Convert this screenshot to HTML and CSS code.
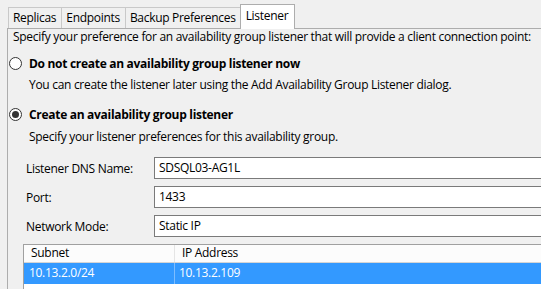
FILE: index.html
```html
<!DOCTYPE html>
<html lang="en">
<head>
    <meta charset="UTF-8">
    <title>Listener</title>
    <link rel="stylesheet" href="styles.css">
</head>
<body>
    <div class="tabs">
        <div class="tab">Replicas</div>
        <div class="tab">Endpoints</div>
        <div class="tab">Backup Preferences</div>
        <div class="tab active">Listener</div>
    </div>

    <div class="panel">
        <div class="intro">Specify your preference for an availability group listener that will provide a client connection point:</div>

        <div class="option">
            <span class="radio"></span>
            <span class="option-title">Do not create an availability group listener now</span>
        </div>
        <div class="hint">You can create the listener later using the Add Availability Group Listener dialog.</div>

        <div class="option second">
            <span class="radio checked"></span>
            <span class="option-title">Create an availability group listener</span>
        </div>
        <div class="hint last">Specify your listener preferences for this availability group.</div>

        <div class="fields">
            <div class="field">
                <label>Listener DNS Name:</label>
                <div class="input">SDSQL03-AG1L</div>
            </div>
            <div class="field">
                <label>Port:</label>
                <div class="input">1433</div>
            </div>
            <div class="field">
                <label>Network Mode:</label>
                <div class="input">Static IP</div>
            </div>
        </div>

        <div class="grid">
            <div class="grid-row grid-head">
                <div class="cell subnet">Subnet</div>
                <div class="cell">IP Address</div>
            </div>
            <div class="grid-row selected">
                <div class="cell subnet">10.13.2.0/24</div>
                <div class="cell">10.13.2.109</div>
            </div>
        </div>
    </div>
</body>
</html>
```

FILE: styles.css
```css
* {
    margin: 0;
    padding: 0;
    box-sizing: border-box;
}

body {
    font-family: 'Open Sans', 'Noto Sans', sans-serif;
    font-size: 12px;
    letter-spacing: -0.3px;
    color: #000;
    background-color: #f0f0f0;
    width: 541px;
    height: 289px;
    overflow: hidden;
}

/* tab strip */
.tabs {
    display: flex;
    align-items: flex-end;
    height: 28px;
    padding-left: 8px;
}

.tab {
    height: 21px;
    line-height: 19px;
    padding: 0 5px 0 4px;
    border: 1px solid #c9c9c9;
    border-bottom: none;
    margin-right: -1px;
    background-color: #f0f0f0;
}

.tab.active {
    height: 25px;
    line-height: 21px;
    margin-left: -1px;
    padding: 0 6px 0 5px;
    background-color: #fff;
    border-color: #adadad;
    position: relative;
    z-index: 1;
    margin-bottom: -1px;
}

/* page body */
.panel {
    margin-left: 7px;
    border-top: 1px solid #adadad;
    border-left: 1px solid #adadad;
    padding-left: 1px;
    height: 262px;
}

.intro {
    line-height: 15px;
    padding-left: 4px;
}

.option {
    display: flex;
    align-items: center;
    height: 16px;
    margin-top: 11px;
    font-weight: 700;
}

.option.second {
    margin-top: 13px;
}

.radio {
    width: 13px;
    height: 13px;
    border: 1px solid #333;
    border-radius: 50%;
    background-color: #fff;
    margin-right: 7px;
    display: flex;
    align-items: center;
    justify-content: center;
}

.radio.checked::after {
    content: "";
    width: 7px;
    height: 7px;
    border-radius: 50%;
    background-color: #333;
}

.hint {
    line-height: 16px;
    padding-left: 20px;
    margin-top: 6px;
}

.hint.last {
    margin-top: 7px;
}

.fields {
    margin-top: 12px;
    padding-left: 17px;
    display: flex;
    flex-direction: column;
    gap: 7px;
}

.field {
    display: flex;
    align-items: center;
    height: 22px;
}

.field label {
    width: 128px;
    flex-shrink: 0;
}

.input {
    flex: 1;
    height: 22px;
    line-height: 20px;
    padding-left: 4px;
    background-color: #fff;
    border: 1px solid #7a7a7a;
    border-right: none;
}

/* subnet / ip list */
.grid {
    margin: 7px 0 0 14px;
    height: 50px;
    background-color: #fff;
    border: 1px solid #a0a0a0;
    border-right: none;
}

.grid-row {
    display: flex;
}

.grid-head {
    height: 18px;
    line-height: 16px;
    background-color: #fcfcfc;
    border-bottom: 1px solid #d5d5d5;
}

.cell {
    padding-left: 7px;
}

.cell.subnet {
    width: 151px;
    border-right: 1px solid #e5e5e5;
}

.selected {
    height: 21px;
    line-height: 20px;
    background-color: #3399ff;
    color: #fff;
}

.selected .cell.subnet {
    padding-left: 5px;
    border-right-color: #7dbdff;
}

.selected .cell {
    padding-left: 4px;
}
```
